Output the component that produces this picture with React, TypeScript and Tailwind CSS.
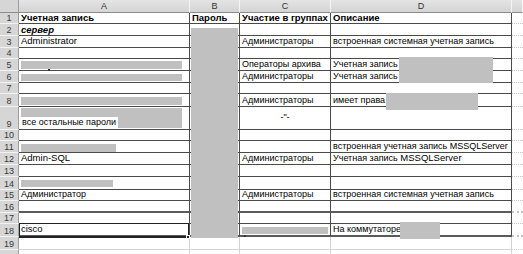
import React from "react";

type Cell = {
    text?: React.ReactNode;
    bold?: boolean;
    italic?: boolean;
    center?: boolean;
    top?: boolean;
    bar?: string;
};
type Row = { n: number; cells: Cell[]; thick?: boolean };

const rowHeights =
    "grid-rows-[13px_11px_12px_12px_11px_12px_12px_11px_13px_23px_11px_12px_12px_12px_13px_11px_12px_11px_13px_13px_13px]";

const Lat = ({ children }: { children: React.ReactNode }) => (
    <span className="text-[9.5px]">{children}</span>
);

const rows: Row[] = [
    {
        n: 1,
        cells: [
            { text: "Учетная запись", bold: true },
            { text: "Пароль", bold: true },
            { text: "Участие в группах", bold: true },
            { text: "Описание", bold: true },
        ],
    },
    { n: 2, cells: [{ text: "сервер", bold: true, italic: true }, {}, {}, {}] },
    {
        n: 3,
        cells: [
            { text: <Lat>Administrator</Lat> },
            {},
            { text: "Администраторы" },
            { text: "встроенная системная учетная запись" },
        ],
    },
    { n: 4, cells: [{}, {}, {}, {}] },
    {
        n: 5,
        cells: [
            { bar: "mt-[2px] w-[161px] h-[8px]" },
            {},
            { text: "Операторы архива" },
            { text: "Учетная запись" },
        ],
    },
    {
        n: 6,
        cells: [
            { bar: "mt-[3px] w-[161px] h-[7px]" },
            {},
            { text: "Администраторы" },
            { text: "Учетная запись" },
        ],
    },
    { n: 7, cells: [{}, {}, {}, {}] },
    {
        n: 8,
        cells: [
            { bar: "mt-[3px] w-[161px] h-[8px]" },
            {},
            { text: "Администраторы" },
            { text: "имеет права" },
        ],
    },
    { n: 9, cells: [{}, {}, { text: '-"-', center: true, top: true }, {}] },
    { n: 10, cells: [{}, {}, {}, {}] },
    {
        n: 11,
        cells: [
            { bar: "mt-[3px] w-[95px] h-[8px]" },
            {},
            {},
            {
                text: (
                    <>
                        встроенная учетная запись <span className="text-[9px]">MSSQLServer</span>
                    </>
                ),
            },
        ],
    },
    {
        n: 12,
        cells: [
            { text: <Lat>Admin-SQL</Lat> },
            {},
            { text: "Администраторы" },
            {
                text: (
                    <>
                        Учетная запись <Lat>MSSQLServer</Lat>
                    </>
                ),
            },
        ],
    },
    { n: 13, cells: [{}, {}, {}, {}] },
    { n: 14, cells: [{ bar: "mt-[3px] w-[92px] h-[7px]" }, {}, {}, {}] },
    {
        n: 15,
        cells: [
            { text: "Администратор" },
            {},
            { text: "Администраторы" },
            { text: "встроенная системная учетная запись" },
        ],
    },
    { n: 16, cells: [{}, {}, {}, {}], thick: true },
    { n: 17, cells: [{}, {}, {}, {}] },
    {
        n: 18,
        cells: [
            { text: <Lat>cisco</Lat> },
            {},
            { bar: "mt-[3px] w-[86px] h-[7px]" },
            { text: "На коммутаторе" },
        ],
        thick: true,
    },
];

// hidden values that run across several rows
const masks = [
    "left-[191px] top-[28px] w-[47px] h-[210px]",
    "left-[399px] top-[57px] w-[94px] h-[26px]",
    "left-[386px] top-[93px] w-[92px] h-[17px]",
    "left-[400px] top-[222px] w-[40px] h-[17px]",
];

function RowHead({ n }: { n: number }) {
    return (
        <div className="bg-[#d6d6d6] border-b border-[#f2f2f2] border-r border-r-[#9c9c9c] flex items-end justify-center text-[9px] leading-[10px] text-[#3a3a3a]">
            {n}
        </div>
    );
}

function DataCell({ c, thick }: { c: Cell; thick?: boolean }) {
    const edge = thick ? "border-b-2 border-b-[#5a5a5a]" : "border-b";
    if (c.bar) {
        return (
            <div className={`border-r border-[#4a4a4a] ${edge} flex items-start pl-[2px]`}>
                <div className={`bg-[#c0c0c0] ${c.bar}`} />
            </div>
        );
    }
    const size = c.bold ? "text-[9.5px]" : "text-[9px]";
    return (
        <div
            className={`border-r border-[#4a4a4a] ${edge} flex ${c.top ? "items-start pt-[5px]" : "items-end"} ${c.center ? "justify-center" : "pl-[2px]"} overflow-hidden whitespace-nowrap ${size} leading-[11px] ${c.bold ? "font-bold" : ""} ${c.italic ? "italic" : ""}`}
        >
            <span>{c.text}</span>
        </div>
    );
}

export default function App() {
    return (
        <div className="relative w-[523px] h-[254px] overflow-hidden bg-white font-['Liberation_Sans',Arial,sans-serif] text-black">
            <div className={`grid grid-cols-[19px_171px_50px_91px_181px_11px] ${rowHeights}`}>
                {/* column letters */}
                <div className="bg-[#d6d6d6] border-r border-[#9c9c9c] border-b border-b-[#8c8c8c]" />
                {["A", "B", "C", "D", ""].map((l, i) => (
                    <div
                        key={i}
                        className="bg-gradient-to-b from-[#e4e4e4] to-[#d4d4d4] border-r border-[#f4f4f4] border-b border-b-[#8c8c8c] flex items-center justify-center text-[9px] leading-[10px] text-[#333]"
                    >
                        {l}
                    </div>
                ))}

                {rows.map((row) => (
                    <React.Fragment key={row.n}>
                        <RowHead n={row.n} />
                        {row.n === 9 ? (
                            <div className="border-r border-b border-[#4a4a4a] pl-[2px] pt-[1px]">
                                <div className="bg-[#c0c0c0] w-[161px] h-[20px]">
                                    <span className="inline-block bg-white pl-[1px] pr-[2px] text-[9px] leading-[11px]">
                                        все остальные пароли
                                    </span>
                                </div>
                            </div>
                        ) : (
                            <DataCell c={row.cells[0]} thick={row.thick} />
                        )}
                        {row.cells.slice(1).map((c, i) => (
                            <DataCell key={i} c={c} thick={row.thick} />
                        ))}
                        <div className={`border-dotted border-[#c4c4c4] ${row.thick ? "border-b-2" : "border-b"}`} />
                    </React.Fragment>
                ))}

                {[19, 20].map((n) => (
                    <React.Fragment key={n}>
                        <RowHead n={n} />
                        {[0, 1, 2, 3].map((i) => (
                            <div key={i} className="border-r border-b border-[#d4d4d4]" />
                        ))}
                        <div className="border-b border-dotted border-[#d4d4d4]" />
                    </React.Fragment>
                ))}
            </div>

            {masks.map((m, i) => (
                <div key={i} className={`absolute bg-[#c0c0c0] ${m}`} />
            ))}

            {/* stray marks */}
            <div className="absolute left-[48px] top-[69px] w-[2px] h-[2px] bg-[#333]" />
            <div className="absolute left-[244px] top-[235px] w-[2px] h-[2px] bg-[#333]" />

            {/* active cell A18 */}
            <div className="absolute left-[19px] top-[223px] w-[170px] h-[15px] border border-[#222] border-b-2" />
            <div className="absolute left-[186px] top-[235px] w-[4px] h-[4px] bg-[#222] border border-white" />
        </div>
    );
}
